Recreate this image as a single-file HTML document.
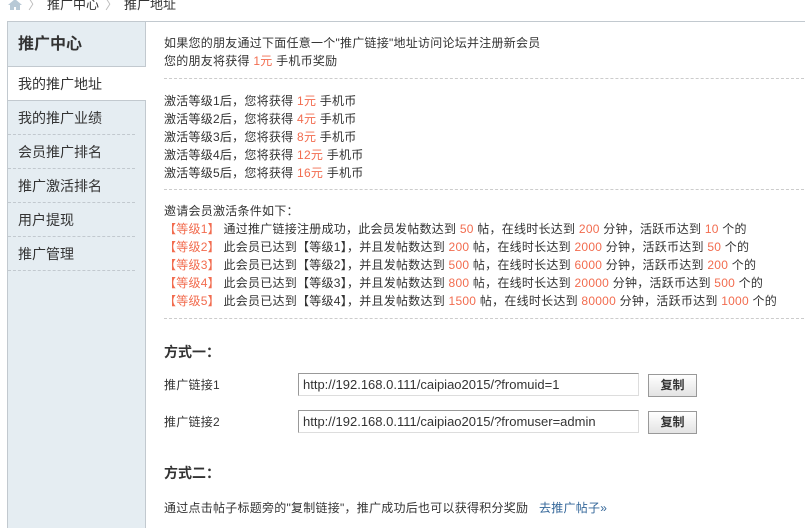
<!DOCTYPE html>
<html><head><meta charset="utf-8"><style>
*{margin:0;padding:0;box-sizing:border-box}
html,body{width:805px;height:528px;overflow:hidden}
body{background:#fff;font:12px "Liberation Sans","Noto Sans CJK SC",sans-serif;color:#333;position:relative}
.crumb{position:absolute;top:-3px;left:8px;height:16px;line-height:16px;font-size:13px;color:#333}
.crumb span.s{color:#bbb;margin:0 6px}
.box{position:absolute;left:7px;top:21px;width:800px;height:510px;border:1px solid #c2c9cf;border-right:none;border-bottom:none}
.side{position:absolute;left:0;top:0;width:138px;height:510px;background:#e5edf2;border-right:1px solid #c2c9cf}
.side h2{height:45px;line-height:45px;padding-left:10px;font-size:16px;color:#333;border-bottom:1px solid #c2c9cf}
.side ul{list-style:none}
.side li{height:34px;line-height:34px;margin:0 10px 0 0;padding-left:10px;font-size:14px;border-bottom:1px dashed #c2c9cf;color:#333}
.side li.a{background:#fff;margin:0 -1px 0 0;border-bottom:1px solid #c2c9cf}
.c{position:absolute;left:156px;top:0;width:640px}
.p{position:absolute;left:0;line-height:18px;white-space:nowrap;letter-spacing:0.25px}
.r{color:#f26c4f}
.dl{position:absolute;left:0;width:640px;border-top:1px dashed #ccc}
h3{position:absolute;left:0;font-size:14px;font-weight:bold}
.inp{position:absolute;left:134px;width:341px;height:23px;border:1px solid #999;border-right-color:#ddd;border-bottom-color:#ddd;line-height:21px;padding-left:4px;font-size:13px}
.btn{position:absolute;left:484px;width:49px;height:23px;border:1px solid #999;background:linear-gradient(#fff,#e3e3e3);font-weight:bold;text-align:center;line-height:21px;font-size:12px}
a{color:#336699;text-decoration:none}
</style></head><body>
<div class="crumb"><svg width="14" height="11" viewBox="0 0 14 11" style="vertical-align:-1px"><path d="M7 0L0 6h2v5h4V8h2v3h4V6h2z" fill="#b8c9d6"/></svg><span class="s">〉</span>推广中心<span class="s">〉</span>推广地址</div>
<div class="box">
<div class="side"><h2>推广中心</h2><ul>
<li class="a">我的推广地址</li><li>我的推广业绩</li><li>会员推广排名</li><li>推广激活排名</li><li>用户提现</li><li>推广管理</li></ul></div>
<div class="c">
<div class="p" style="top:12px">如果您的朋友通过下面任意一个"推广链接"地址访问论坛并注册新会员<br>您的朋友将获得 <span class="r">1元</span> 手机币奖励</div>
<div class="dl" style="top:56px"></div>
<div class="p" style="top:70px">激活等级1后，您将获得 <span class="r">1元</span> 手机币<br>激活等级2后，您将获得 <span class="r">4元</span> 手机币<br>激活等级3后，您将获得 <span class="r">8元</span> 手机币<br>激活等级4后，您将获得 <span class="r">12元</span> 手机币<br>激活等级5后，您将获得 <span class="r">16元</span> 手机币</div>
<div class="dl" style="top:167px"></div>
<div class="p" style="top:180px">邀请会员激活条件如下：<br>
<span class="r">【等级1】</span> 通过推广链接注册成功，此会员发帖数达到 <span class="r">50</span> 帖，在线时长达到 <span class="r">200</span> 分钟，活跃币达到 <span class="r">10</span> 个的<br>
<span class="r">【等级2】</span> 此会员已达到【等级1】，并且发帖数达到 <span class="r">200</span> 帖，在线时长达到 <span class="r">2000</span> 分钟，活跃币达到 <span class="r">50</span> 个的<br>
<span class="r">【等级3】</span> 此会员已达到【等级2】，并且发帖数达到 <span class="r">500</span> 帖，在线时长达到 <span class="r">6000</span> 分钟，活跃币达到 <span class="r">200</span> 个的<br>
<span class="r">【等级4】</span> 此会员已达到【等级3】，并且发帖数达到 <span class="r">800</span> 帖，在线时长达到 <span class="r">20000</span> 分钟，活跃币达到 <span class="r">500</span> 个的<br>
<span class="r">【等级5】</span> 此会员已达到【等级4】，并且发帖数达到 <span class="r">1500</span> 帖，在线时长达到 <span class="r">80000</span> 分钟，活跃币达到 <span class="r">1000</span> 个的</div>
<div class="dl" style="top:296px"></div>
<h3 style="top:320px">方式一：</h3>
<div class="p" style="top:354px">推广链接1</div><div class="inp" style="top:351px">http://192.168.0.111/caipiao2015/?fromuid=1</div><div class="btn" style="top:352px">复制</div>
<div class="p" style="top:391px">推广链接2</div><div class="inp" style="top:388px">http://192.168.0.111/caipiao2015/?fromuser=admin</div><div class="btn" style="top:389px">复制</div>
<h3 style="top:441px">方式二：</h3>
<div class="p" style="top:477px">通过点击帖子标题旁的"复制链接"，推广成功后也可以获得积分奖励 &nbsp; <a>去推广帖子»</a></div>
</div></div>
</body></html>
